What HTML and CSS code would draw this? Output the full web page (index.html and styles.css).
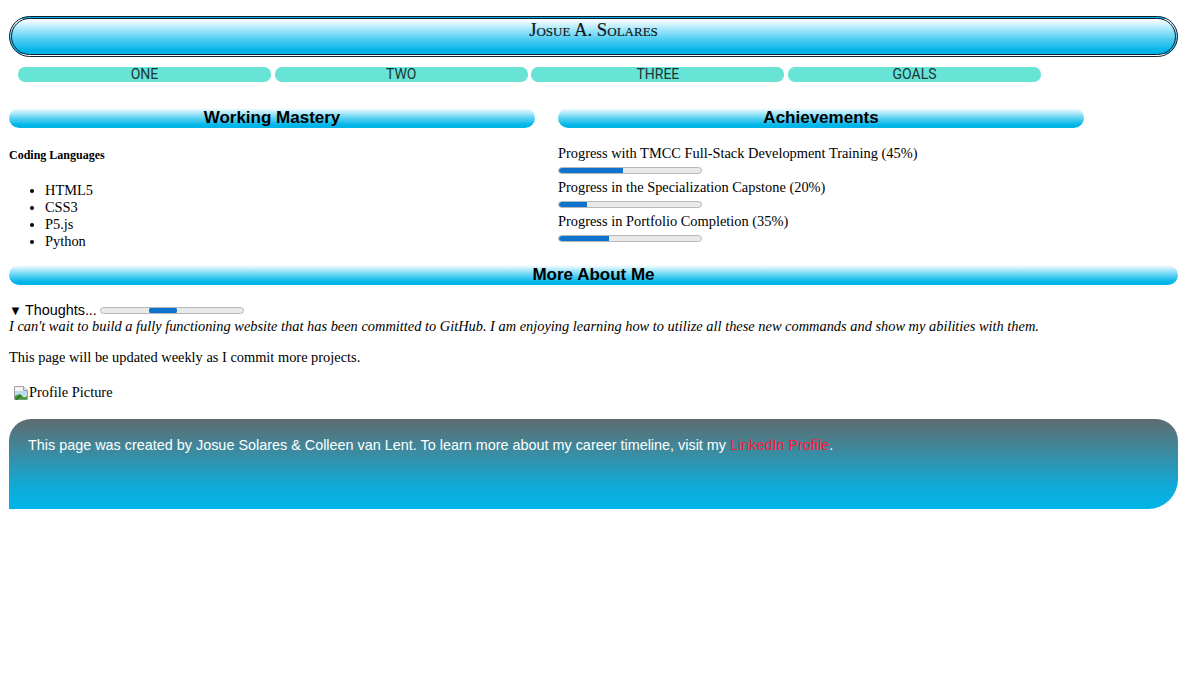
FILE: index.html
```html
<!DOCTYPE html>
<html lang="en">
<head>
<meta charset="utf-8">
<title>Josue A. Solares</title>
<link rel="stylesheet" href="styles.css">
</head>
<body>
<div class="page">
  <header class="masthead">
    <h1 class="title">Josue A. Solares</h1>
  </header>
  <nav class="nav">
    <a class="nav-btn">ONE</a>
    <a class="nav-btn">TWO</a>
    <a class="nav-btn">THREE</a>
    <a class="nav-btn">GOALS</a>
  </nav>
  <div class="columns">
    <section class="col">
      <h2 class="bar">Working Mastery</h2>
      <h4 class="sub">Coding Languages</h4>
      <ul class="langs">
        <li>HTML5</li>
        <li>CSS3</li>
        <li>P5.js</li>
        <li>Python</li>
      </ul>
    </section>
    <section class="col">
      <h2 class="bar">Achievements</h2>
      <div class="prog-list">
        <div class="prog-item">
          <div class="prog-label">Progress with TMCC Full-Stack Development Training (45%)</div>
          <div class="prog"><div class="prog-fill" style="width:45%"></div></div>
        </div>
        <div class="prog-item">
          <div class="prog-label">Progress in the Specialization Capstone (20%)</div>
          <div class="prog"><div class="prog-fill" style="width:20%"></div></div>
        </div>
        <div class="prog-item">
          <div class="prog-label">Progress in Portfolio Completion (35%)</div>
          <div class="prog"><div class="prog-fill" style="width:35%"></div></div>
        </div>
      </div>
    </section>
  </div>
  <h2 class="bar wide">More About Me</h2>
  <div class="thoughts">
    <div class="summary"><span class="tri">▼</span> Thoughts... <span class="prog indet"><span class="indet-fill"></span></span></div>
    <p class="quote">I can't wait to build a fully functioning website that has been committed to GitHub. I am enjoying learning how to utilize all these new commands and show my abilities with them.</p>
  </div>
  <p class="note">This page will be updated weekly as I commit more projects.</p>
  <div class="pic">
    <svg class="broken" width="16" height="16" viewBox="0 0 16 16">
      <path d="M1.5 1.5h9l4 4v9h-13z" fill="#f4f4f4" stroke="#a0a0a0"/>
      <path d="M10.5 1.5v4h4" fill="#e0e0e0" stroke="#a0a0a0"/>
      <rect x="2" y="6" width="12" height="5" fill="#bcd9ee"/>
      <path d="M2 14.5 L2 11 Q6 8 9 11 Q12 13 14 11 L14 14.5 Z" fill="#4a9a3a"/>
      <path d="M2 14 L7 9 L9 11 L4 15 Z" fill="#2e7d24"/>
    </svg><span class="alt">Profile Picture</span>
  </div>
  <footer class="footer">
    <p class="foot-text">This page was created by Josue Solares &amp; Colleen van Lent. To learn more about my career timeline, visit my <a class="foot-link">LinkedIn Profile</a>.</p>
  </footer>
</div>
</body>
</html>
```
FILE: styles.css
```css
html, body {
  margin: 0;
  padding: 0;
  background: #ffffff;
}
body {
  font-family: "Liberation Serif", "Times New Roman", serif;
  color: #000;
}
.page {
  width: 1169px;
  padding: 16px 0 0 9px;
}
.masthead {
  box-sizing: border-box;
  height: 41px;
  border: 3px double #102030;
  border-radius: 22px;
  background: linear-gradient(to bottom, #ffffff 0%, #bdeefc 22%, #58d0f2 55%, #00b5e8 90%, #00b4e8 100%);
}
.title {
  margin: 0;
  padding-top: 0;
  text-align: center;
  font-family: "Liberation Serif", "Times New Roman", serif;
  font-variant: small-caps;
  font-weight: normal;
  font-size: 18.7px;
  line-height: 22px;
  color: #101820;
  -webkit-text-stroke: 0.2px #101820;
}
.nav {
  display: flex;
  gap: 3.7px;
  margin-top: 10px;
  padding-left: 9px;
}
.nav-btn {
  display: block;
  width: 253px;
  height: 15px;
  line-height: 15px;
  border-radius: 7px;
  background: #68e4d6;
  text-align: center;
  font-family: Roboto, "Liberation Sans", sans-serif;
  font-size: 14px;
  color: #1c3436;
}
.columns {
  display: flex;
  gap: 23px;
  margin-top: 26px;
}
.col {
  width: 526px;
}
.bar {
  margin: 0;
  height: 20px;
  line-height: 20px;
  border-radius: 10px;
  background: linear-gradient(to bottom, #ffffff 0%, #bdeefc 20%, #5fd2f3 50%, #00b5e8 85%, #00b4e8 100%);
  text-align: center;
  font-family: "Liberation Sans", Arial, sans-serif;
  font-weight: bold;
  font-size: 17px;
  color: #000;
}
.bar.wide {
  width: 1169px;
  margin-top: 15px;
}
.sub {
  margin: 20px 0 0 0;
  font-size: 12px;
  line-height: 14px;
  font-weight: bold;
}
.langs {
  margin: 20px 0 0 0;
  padding-left: 36px;
  font-size: 14.4px;
  line-height: 17px;
}
.prog-list {
  margin-top: 17px;
  display: flex;
  flex-direction: column;
}
.prog-label {
  font-size: 14.4px;
  line-height: 17px;
  height: 17px;
}
.prog {
  box-sizing: border-box;
  display: block;
  width: 144px;
  height: 7px;
  margin: 5px 0 5px 0;
  border: 1px solid #b8b8b8;
  border-radius: 4px;
  background: #e9e9e9;
  overflow: hidden;
}
.prog-fill {
  height: 100%;
  background: #0f72cd;
  border-radius: 3px 0 0 3px;
}
.thoughts {
  margin-top: 17px;
}
.summary {
  display: flex;
  align-items: center;
  font-family: "Liberation Sans", Arial, sans-serif;
  font-size: 14.4px;
  line-height: 17px;
}
.tri {
  font-size: 13px;
  margin-right: 3px;
}
.prog.indet {
  display: inline-block;
  position: relative;
  margin: 0 0 0 3px;
}
.indet-fill {
  position: absolute;
  left: 48px;
  top: -1px;
  width: 28px;
  height: 7px;
  border-radius: 4px;
  background: #0f72cd;
}
.quote {
  margin: -1px 0 0 0;
  font-style: italic;
  font-size: 14.4px;
  line-height: 17px;
}
.note {
  margin: 14px 0 0 0;
  font-size: 14.4px;
  line-height: 17px;
}
.pic {
  display: flex;
  align-items: center;
  margin: 18px 0 0 4px;
  font-size: 14.4px;
  line-height: 17px;
}
.broken {
  display: block;
}
.footer {
  box-sizing: border-box;
  width: 1169px;
  height: 90px;
  margin-top: 18px;
  padding: 18px 19px 0 19px;
  border-radius: 22px 22px 30px 0;
  background: linear-gradient(to bottom, #5f6b70 0%, #3d8a9e 35%, #10aad8 75%, #00b5e8 100%);
}
.foot-text {
  margin: 0;
  font-family: "Liberation Sans", Arial, sans-serif;
  font-size: 14.4px;
  line-height: 17px;
  color: #ffffff;
}
.foot-link {
  color: #ff1a3a;
}
```
